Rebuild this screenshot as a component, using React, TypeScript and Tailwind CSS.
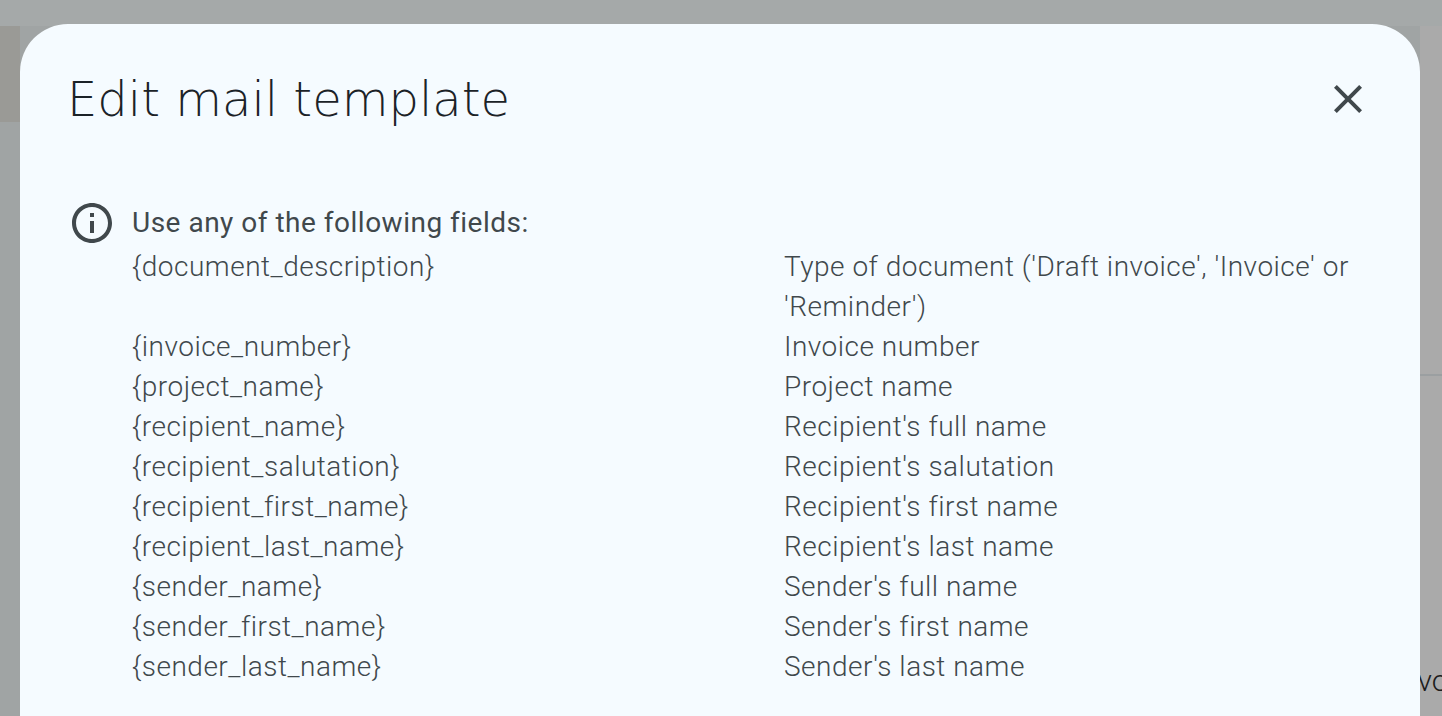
const campos: [string, string][] = [
  ['{document_description}', "Type of document ('Draft invoice', 'Invoice' or 'Reminder')"],
  ['{invoice_number}', 'Invoice number'],
  ['{project_name}', 'Project name'],
  ['{recipient_name}', "Recipient's full name"],
  ['{recipient_salutation}', "Recipient's salutation"],
  ['{recipient_first_name}', "Recipient's first name"],
  ['{recipient_last_name}', "Recipient's last name"],
  ['{sender_name}', "Sender's full name"],
  ['{sender_first_name}', "Sender's first name"],
  ['{sender_last_name}', "Sender's last name"],
];

export default function App() {
  return (
    <div className="relative h-[716px] w-[1442px] overflow-hidden bg-[#a0a4a4] font-['Roboto',sans-serif]">
      {/* page behind the dialog */}
      <div className="h-[26px] bg-[#a5a9a9]" />
      <div className="flex h-[690px]">
        <div className="w-5 shrink-0">
          <div className="h-[96px] bg-[#9a9a96]" />
        </div>
        <div className="flex-1" />
        <div className="flex w-[22px] shrink-0 flex-col overflow-hidden bg-[#aaaaaa]">
          <div className="mt-[348px] h-0.5 bg-[#9b9fa1]" />
          <div className="mt-[289px] -ml-[27px] whitespace-nowrap text-[30px] font-light leading-8 text-[#1c1c1c]">Invoice</div>
        </div>
      </div>

      {/* dialog */}
      <div className="absolute left-5 top-6 h-[760px] w-[1400px] rounded-[48px] bg-[#f5fbff] px-[50px] pt-[44px]">
        <div className="flex items-center justify-between">
          <h1 className="-ml-[3px] font-['DejaVu_Sans',sans-serif] text-[48px] font-extralight leading-[62px] text-[#1b2227]">
            Edit mail template
          </h1>
          <button className="mr-[-2px] text-[#40484c]" aria-label="Close">
            <svg width="48" height="48" viewBox="0 0 24 24" fill="currentColor">
              <path d="M19 6.41 17.59 5 12 10.59 6.41 5 5 6.41 10.59 12 5 17.59 6.41 19 12 13.41 17.59 19 19 17.59 13.41 12z" />
            </svg>
          </button>
        </div>

        <div className="mt-[73px] flex text-[#40484c]">
          <svg className="-ml-[2px] mt-[-4px] shrink-0" width="48" height="48" viewBox="0 0 24 24" fill="currentColor">
            <path d="M11 7h2v2h-2zm0 4h2v6h-2zm1-9C6.48 2 2 6.48 2 12s4.48 10 10 10 10-4.48 10-10S17.52 2 12 2zm0 18c-4.41 0-8-3.59-8-8s3.59-8 8-8 8 3.59 8 8-3.59 8-8 8z" />
          </svg>
          <div className="ml-4 w-[1218px]">
            <p className="mb-1 text-[28px] leading-10 tracking-[0.5px]">Use any of the following fields:</p>
            <div className="grid grid-cols-[652px_566px] text-[28px] font-light leading-10 tracking-[0.5px]">
              {campos.map(([campo, descripcion]) => (
                <div key={campo} className="contents">
                  <div>{campo}</div>
                  <div>{descripcion}</div>
                </div>
              ))}
            </div>
          </div>
        </div>
      </div>
    </div>
  );
}
